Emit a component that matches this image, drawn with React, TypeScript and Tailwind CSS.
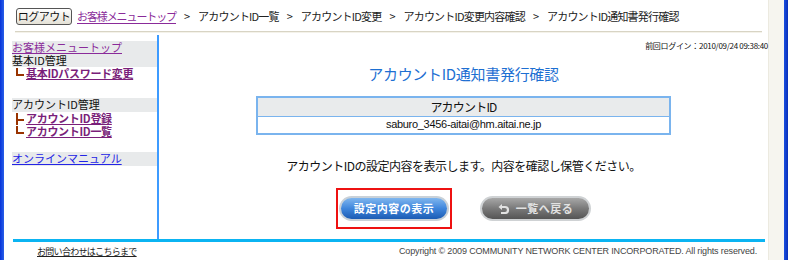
import React from "react";

const jp = { fontFamily: '"Noto Sans CJK JP", "Liberation Sans", sans-serif' };

function Tree({ kind }: { kind: "end" | "mid" }) {
  return (
    <span className="relative inline-block w-[11px] h-[12px] ml-[2px] mr-[1px] align-middle">
      <span className="absolute left-[2px] top-[0px] w-[2px] bg-[#993300]" style={{ height: kind === "end" ? 8 : 12 }} />
      <span className="absolute left-[2px] top-[6px] w-[8px] h-[2px] bg-[#993300]" />
    </span>
  );
}

export default function App() {
  return (
    <div className="w-[788px] h-[260px] flex bg-white overflow-hidden text-[#222]" style={jp}>
      <div className="w-[4px] h-full bg-gradient-to-r from-[#0831d9] to-[#2a5ee8]" />
      <div className="flex-1 flex flex-col">
        {/* header */}
        <div className="h-[31px] flex items-center pl-[12px] pt-[2px]">
          <button className="h-[17px] w-[56px] border border-[#555] rounded-[3px] bg-gradient-to-b from-white to-[#e4e1d6] text-[11px] leading-none text-[#111] tracking-[-0.5px]">
            ログアウト
          </button>
          <div className="ml-[5px] text-[11px] leading-[13px] tracking-[-0.8px] flex items-center whitespace-nowrap text-[#222]">
            <a className="text-[#8a2b9a] underline underline-offset-2 tracking-[-1.1px]">お客様メニュートップ</a>
            <span className="mx-[8px] tracking-normal">&gt;</span>
            <span>アカウントID一覧</span>
            <span className="mx-[8px] tracking-normal">&gt;</span>
            <span>アカウントID変更</span>
            <span className="mx-[8px] tracking-normal">&gt;</span>
            <span>アカウントID変更内容確認</span>
            <span className="mx-[8px] tracking-normal">&gt;</span>
            <span>アカウントID通知書発行確認</span>
          </div>
        </div>
        <div className="ml-[11px] mr-[6px] h-[2px] border-t border-[#d8d4c4] border-b border-b-[#f4f2ea]" />
        {/* body */}
        <div className="flex flex-1 mt-[2px]">
          <div className="ml-[8px] w-[147px] pt-[6px] text-[11px] leading-[13px] tracking-[0px] border-r-2 border-[#3d9bff]">
            <div className="w-[145px] h-[13px] bg-[#e8eaeb]">
              <a className="text-[#8a2b9a] underline">お客様メニュートップ</a>
            </div>
            <div className="w-[145px] h-[13px] bg-[#e8eaeb] text-[#111]">基本ID管理</div>
            <div className="flex items-center h-[13px]">
              <Tree kind="end" />
              <a className="text-[#7a1f7a] font-bold underline tracking-[-0.3px]">基本IDパスワード変更</a>
            </div>
            <div className="h-[18px]" />
            <div className="w-[145px] bg-[#e8eaeb] text-[#111] h-[14px]">アカウントID管理</div>
            <div className="flex items-center h-[13px]">
              <Tree kind="mid" />
              <a className="text-[#7a1f7a] font-bold underline tracking-[-0.3px]">アカウントID登録</a>
            </div>
            <div className="flex items-center h-[13px]">
              <Tree kind="end" />
              <a className="text-[#7a1f7a] font-bold underline tracking-[-0.3px]">アカウントID一覧</a>
            </div>
            <div className="h-[14px]" />
            <div className="w-[145px] h-[14px] bg-[#e8eaeb]">
              <a className="text-[#2424e6] underline">オンラインマニュアル</a>
            </div>
          </div>
          <div className="flex-1 flex flex-col items-center relative">
            <div className="self-end mt-[6px] text-[8px] leading-[10px] tracking-[-0.3px] text-[#111]">
              前回ログイン：2010/09/24 09:38:40
            </div>
            <div className="mt-[14px] text-[15px] leading-[18px] text-[#1d6fd2] tracking-[-0.3px]">
              アカウントID通知書発行確認
            </div>
            <table className="mt-[13px] w-[415px] border-collapse border-2 border-[#7ab4ee] text-[12px] tracking-[-0.8px]">
              <tbody>
                <tr>
                  <td className="bg-[#e9ebec] h-[19px] text-center border border-[#7ab4ee] leading-none text-[#111]">アカウントID</td>
                </tr>
                <tr>
                  <td className="h-[18px] text-center border border-[#7ab4ee] leading-none text-[#111] tracking-[-0.3px]" style={{ fontFamily: '"Liberation Sans", sans-serif', fontSize: 11 }}>
                    saburo_3456-aitai@hm.aitai.ne.jp
                  </td>
                </tr>
              </tbody>
            </table>
            <div className="mt-[24px] text-[12px] leading-[14px] tracking-[-0.5px] text-[#111]">
              アカウントIDの設定内容を表示します。内容を確認し保管ください。
            </div>
            <div className="mt-[15px] flex items-center gap-[28px]">
              <div className="border-2 border-[#ee1111] w-[116px] h-[41px] flex items-center justify-center">
                <div className="rounded-full p-[2px] bg-[#c9d1d8]">
                  <div className="w-[106px] h-[21px] rounded-full bg-gradient-to-b from-[#7fb6ee] via-[#3f86dc] to-[#1c5cb4] flex items-center justify-center text-white text-[11px] font-bold tracking-[0.5px]">
                    設定内容の表示
                  </div>
                </div>
              </div>
              <div className="rounded-full p-[2px] bg-[#cfd2d4]">
                <div className="w-[107px] h-[21px] rounded-full bg-gradient-to-b from-[#a8a8a8] via-[#7a7a7a] to-[#555] flex items-center justify-center text-[#e2e2e2] text-[11px] font-bold tracking-[0.5px] gap-[6px]">
                  <svg width="12" height="10" viewBox="0 0 12 10">
                    <path d="M3 3 H7 A3 3 0 0 1 7 9 H3" fill="none" stroke="#e2e2e2" strokeWidth="2.2" />
                    <path d="M0.5 3 L4 0 V6 Z" fill="#e2e2e2" />
                  </svg>
                  <span>一覧へ戻る</span>
                </div>
              </div>
            </div>
          </div>
        </div>
        {/* footer */}
        <div className="ml-[9px] mr-[3px] h-[3px] bg-[#0bb4f2]" />
        <div className="h-[18px] flex items-center justify-between pl-[33px] pr-[11px]">
          <a className="text-[9px] leading-none underline text-[#222] tracking-[-0.7px]">お問い合わせはこちらまで</a>
          <span className="text-[9px] leading-none text-[#444] tracking-[-0.15px]" style={{ fontFamily: '"Liberation Sans", sans-serif' }}>
            Copyright © 2009 COMMUNITY NETWORK CENTER INCORPORATED. All rights reserved.
          </span>
        </div>
      </div>
      <div className="w-[16px] h-full bg-[#f6f5ef] border-l border-[#eceae0]" />
      <div className="w-[4px] h-full bg-gradient-to-r from-[#1a4fe0] to-[#0a2fb8]" />
    </div>
  );
}
